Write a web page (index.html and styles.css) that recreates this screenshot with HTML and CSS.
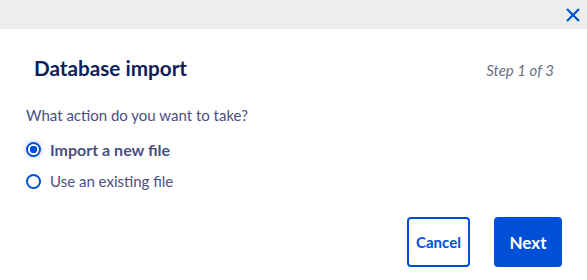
FILE: index.html
```html
<!DOCTYPE html>
<html lang="en">
<head>
    <meta charset="UTF-8">
    <title>Database import</title>
    <link rel="stylesheet" href="styles.css">
</head>
<body>
    <div class="modal">
        <div class="modal-bar">
            <button class="close" aria-label="Close">
                <svg width="16" height="16" viewBox="0 0 16 16"><path d="M2 2 L14 14 M14 2 L2 14" stroke="#0050d7" stroke-width="2.2" fill="none"/></svg>
            </button>
        </div>
        <div class="modal-body">
            <div class="modal-header">
                <h1 class="modal-title">Database import</h1>
                <span class="step">Step 1 of 3</span>
            </div>
            <p class="question">What action do you want to take?</p>
            <label class="radio">
                <input type="radio" name="action" checked>
                <span class="dot"></span>
                <span class="radio-text strong">Import a new file</span>
            </label>
            <label class="radio">
                <input type="radio" name="action">
                <span class="dot"></span>
                <span class="radio-text">Use an existing file</span>
            </label>
            <div class="actions">
                <button class="btn btn-outline">Cancel</button>
                <button class="btn btn-primary">Next</button>
            </div>
        </div>
    </div>
</body>
</html>
```

FILE: styles.css
```css
* {
    margin: 0;
    padding: 0;
    box-sizing: border-box;
    font-family: Lato, "Open Sans", Arial, sans-serif;
}

body {
    background: white;
    width: 587px;
    height: 280px;
    overflow: hidden;
}

.modal-bar {
    height: 29px;
    background-color: #eceeeb;
    display: flex;
    justify-content: flex-end;
    align-items: center;
    padding-right: 6px;
}

.close {
    background: none;
    border: none;
    display: flex;
    cursor: pointer;
}

.modal-body {
    padding: 27px 25px 0 26px;
}

.modal-header {
    display: flex;
    justify-content: space-between;
    align-items: baseline;
    padding: 0 8px 0 8px;
    margin-bottom: 26px;
}

.modal-title {
    font-size: 20.7px;
    font-weight: bold;
    color: #0c1e5b;
}

.step {
    font-size: 15px;
    font-style: italic;
    color: #6c707c;
}

.question {
    font-size: 15px;
    color: #4a4f7f;
    margin-bottom: 9px;
}

.radio {
    display: flex;
    align-items: center;
    height: 32px;
    cursor: pointer;
}

.radio input {
    display: none;
}

.dot {
    width: 15px;
    height: 15px;
    border: 2px solid #0050d7;
    border-radius: 50%;
    margin-right: 9px;
    flex-shrink: 0;
}

.radio input:checked + .dot {
    background: radial-gradient(circle, #0050d7 0, #0050d7 3.5px, white 4px);
    box-shadow: 0 0 5px rgba(0, 80, 215, 0.35);
}

.radio-text {
    font-size: 15px;
    color: #4a4f7f;
}

.radio-text.strong {
    font-size: 16px;
    font-weight: bold;
}

.actions {
    display: flex;
    justify-content: flex-end;
    gap: 24px;
    margin-top: 20px;
}

.btn {
    height: 50px;
    border-radius: 4px;
    font-size: 15px;
    font-weight: bold;
    cursor: pointer;
}

.btn-outline {
    width: 63px;
    background: white;
    border: 2px solid #0050d7;
    color: #0050d7;
}

.btn-primary {
    width: 68px;
    background-color: #0050d7;
    border: none;
    color: white;
    font-size: 17px;
}
```
